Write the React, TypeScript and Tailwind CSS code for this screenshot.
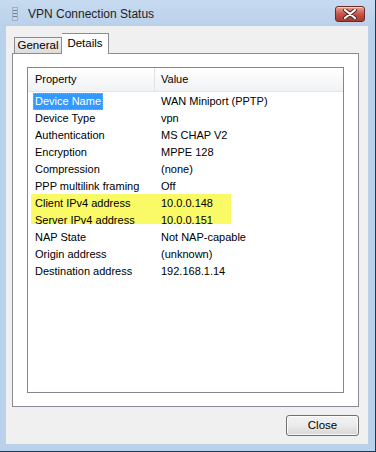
import React from 'react'

const rows: [string, string][] = [
  ['Device Name', 'WAN Miniport (PPTP)'],
  ['Device Type', 'vpn'],
  ['Authentication', 'MS CHAP V2'],
  ['Encryption', 'MPPE 128'],
  ['Compression', '(none)'],
  ['PPP multilink framing', 'Off'],
  ['Client IPv4 address', '10.0.0.148'],
  ['Server IPv4 address', '10.0.0.151'],
  ['NAP State', 'Not NAP-capable'],
  ['Origin address', '(unknown)'],
  ['Destination address', '192.168.1.14'],
]

function Row({ name, value, selected }: { name: string; value: string; selected?: boolean }) {
  return (
    <div className="flex h-[17px] items-center">
      <div className="w-[127px] pl-[5px]">
        <span
          className={
            selected
              ? 'inline-block h-[17px] border border-dotted border-[#e89a3c] bg-[#3399ff] px-[1px] leading-[15px] text-white'
              : 'inline-block px-[2px]'
          }
        >
          {name}
        </span>
      </div>
      <div className="pl-[6px]">{value}</div>
    </div>
  )
}

export default function App() {
  return (
    <div
      className="flex h-[452px] w-[376px] flex-col border-r border-b border-[#1b3a55] bg-[#b9d1ea] text-[11px] text-black"
      style={{ fontFamily: '"Liberation Sans", Arial, sans-serif' }}
    >
      {/* title bar */}
      <div className="flex h-[26px] shrink-0 items-center bg-gradient-to-b from-[#c7dbf0] to-[#b9d1ea] pl-[12px] pr-[10px] pt-[2px]">
        <svg width="6" height="14" viewBox="0 0 6 14">
          <rect x="0" y="0" width="6" height="14" fill="#9fb0c6" />
          <rect x="1" y="1" width="4" height="12" fill="#c9d4e2" />
          <line x1="1" y1="3.5" x2="5" y2="3.5" stroke="#6f829c" />
          <line x1="1" y1="6.5" x2="5" y2="6.5" stroke="#6f829c" />
          <line x1="1" y1="9.5" x2="5" y2="9.5" stroke="#6f829c" />
        </svg>
        <span className="ml-[10px] text-[12px] text-[#1e1e1e]">VPN Connection Status</span>
        <div className="ml-auto flex h-[16px] w-[30px] items-center justify-center rounded-[3px] border border-[#6b2a22] bg-gradient-to-b from-[#e3a294] via-[#c8534a] to-[#a8392e] shadow-[inset_0_1px_0_rgba(255,255,255,0.5)]">
          <svg width="14" height="10" viewBox="0 0 14 10">
            <path d="M2 1 L12 9 M12 1 L2 9" stroke="#4a2420" strokeWidth="4" strokeLinecap="round" />
            <path d="M2 1 L12 9 M12 1 L2 9" stroke="#ffffff" strokeWidth="2.2" strokeLinecap="round" />
          </svg>
        </div>
      </div>

      {/* client area */}
      <div className="ml-[6px] mr-[7px] mb-[8px] flex flex-1 flex-col bg-[#f0f0f0] pt-[7px] pl-[6px] pr-[9px] pb-[8px]">
        {/* tabs */}
        <div className="flex h-[20px] items-end pl-[2px]">
          <div className="flex h-[16px] w-[48px] items-center justify-center border border-b-0 border-[#898c95] bg-gradient-to-b from-[#f2f2f2] to-[#dcdcdc] text-[11.5px]">
            General
          </div>
          <div className="relative -mb-px flex h-[21px] w-[47px] items-center justify-center border border-b-0 border-l-0 border-[#898c95] bg-white text-[11.5px]">
            Details
          </div>
        </div>

        {/* tab page */}
        <div className="flex h-[354px] flex-col border border-[#898c95] bg-white px-[14px] pt-[13px] pb-[13px]">
          <div className="flex flex-1 flex-col border border-[#828790] bg-white">
            <div className="flex h-[24px] items-center border-b border-[#e3e6eb] bg-gradient-to-b from-white to-[#f1f2f4]">
              <div className="flex h-full w-[127px] items-center border-r border-[#dfe3e8] pl-[7px]">Property</div>
              <div className="pl-[6px]">Value</div>
            </div>
            <div className="mt-[1px] flex flex-col">
              {rows.slice(0, 6).map(([n, v], i) => (
                <Row key={n} name={n} value={v} selected={i === 0} />
              ))}
              <div className="relative">
                <div className="absolute left-[3px] top-[-1px] h-[30px] w-[200px] bg-[#fafa66]" />
                <div className="relative">
                  {rows.slice(6, 8).map(([n, v]) => (
                    <Row key={n} name={n} value={v} />
                  ))}
                </div>
              </div>
              {rows.slice(8).map(([n, v]) => (
                <Row key={n} name={n} value={v} />
              ))}
            </div>
          </div>
        </div>

        {/* buttons */}
        <div className="mt-[8px] flex justify-end">
          <div className="flex h-[21px] w-[73px] items-center justify-center rounded-[3px] border border-[#707070] bg-gradient-to-b from-[#f2f2f2] via-[#ebebeb] to-[#d6d6d6] text-[11.5px] shadow-[inset_0_0_0_1px_rgba(255,255,255,0.8)]">
            Close
          </div>
        </div>
      </div>
    </div>
  )
}
